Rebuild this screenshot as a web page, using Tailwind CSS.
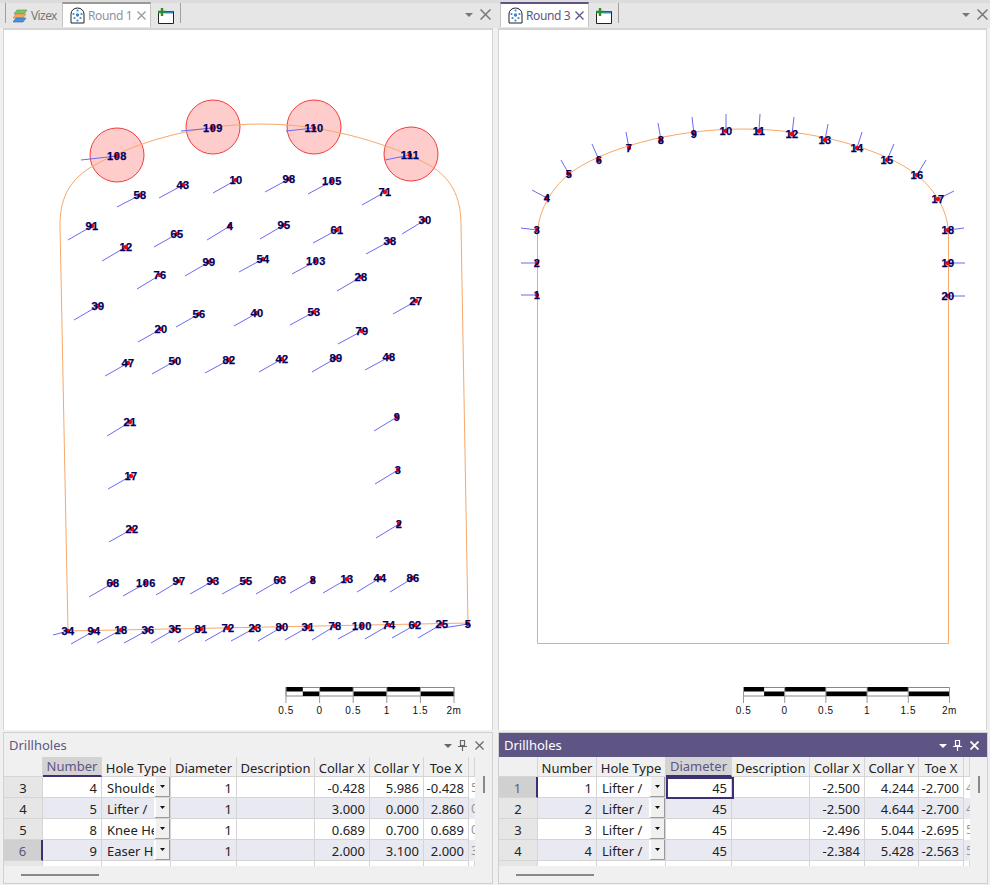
<!DOCTYPE html><html lang="en">
<head>
<meta charset="UTF-8">
<title>Drillholes</title>
<script src="https://cdn.jsdelivr.net/npm/@tailwindcss/browser@4"></script>
</head>
<body class="bg-[#f0f0f0] overflow-hidden">
<div class="w-[990px] h-[885px] flex font-['Noto_Sans',sans-serif] text-[13px] text-[#222]">

  <!-- left pane -->
  <div class="w-[495px] h-full flex flex-col">
    <div class="h-[28px] pl-[5px] pr-[2px] flex items-end bg-[#e6e6e6] border-t-[3px] border-[#dcdcdc]">
      <div class="w-px h-[20px] mb-[5px] bg-[#a0a0a0]"></div>
      <div class="w-[56px] h-[24px] flex items-center pl-[7px] gap-[3px] text-[12px] tracking-[-0.6px] text-[#777]">
        <svg width="15" height="15" viewBox="0 0 15 15"><path d="M4 1h10l-3 4H1z" fill="#7cc36e" stroke="#4a9a46" stroke-width=".6"/><path d="M3 5h10l-3 4H0z" fill="#f2a65a" stroke="#d2803a" stroke-width=".6"/><path d="M3 9h10l-3 4H0z" fill="#4a90d9" stroke="#2a6cb0" stroke-width=".6"/></svg>
        <span>Vizex</span>
      </div>
      <div class="w-[89px] h-[25px] mb-[1px] flex items-center pl-[7px] gap-[3px] whitespace-nowrap bg-white border-x border-[#c4c4c4] border-t-[2px] border-t-[#999] text-[12px] tracking-[-0.4px] text-[#8f8fa3]">
        <svg class="shrink-0" width="15" height="17" viewBox="0 0 15 17"><path d="M1 16V7a6.500 6 0 0 1 13 0v9z" fill="#fff" stroke="#222"/><g fill="#3a86c8"><circle cx="7.500" cy="3.500" r="1.100"/><circle cx="7.500" cy="8" r="1.700"/><circle cx="3.500" cy="7" r="1.100"/><circle cx="11.500" cy="7" r="1.100"/><circle cx="4.500" cy="11" r="1.100"/><circle cx="10.500" cy="11" r="1.100"/><circle cx="7.500" cy="13.500" r="1.100"/></g></svg>
        <span>Round 1</span>
        <svg class="ml-auto mr-[4px] shrink-0" width="9" height="9" viewBox="0 0 9 9"><path d="M.5.5l8 8M8.500.5l-8 8" stroke="#999" stroke-width="1.300"/></svg>
      </div>
      <svg class="ml-[7px] mb-[4px]" width="17" height="16" viewBox="0 0 17 16"><path d="M.5 3.500h15v12H.5z" fill="#fff" stroke="#222"/><path d="M8 4.500h7" stroke="#3b8ad0" stroke-width="2"/><path d="M4 0v8M0 4h8" stroke="#2f8a32" stroke-width="2.400"/></svg>
      <div class="w-px h-[20px] mb-[5px] ml-[5px] bg-[#a0a0a0]"></div>
      <div class="ml-auto flex items-center gap-[7px] mb-[8px]">
        <svg width="8" height="4" viewBox="0 0 8 4"><path d="M0 0h8L4 4z" fill="#777"/></svg>
        <svg class="mr-[2px]" width="11" height="11" viewBox="0 0 11 11"><path d="M.5.5l10 10M10.500.5l-10 10" stroke="#777" stroke-width="1.500"/></svg>
      </div>
    </div>
    <div class="ml-[3px] mr-[2px] h-[702px] bg-white border-t-2 border-x border-[#d4d4d4]">
      <svg id="left-view" class="block w-full h-full" viewBox="4 30 488 700"></svg>
    </div>
    <div id="left-panel" class="mt-[2px] ml-[3px] mr-[2px] h-[152px] border border-[#d0d0d0] bg-[#f0f0f0] flex flex-col"></div>
  </div>

  <!-- right pane -->
  <div class="w-[495px] h-full flex flex-col">
    <div class="h-[28px] pl-[5px] flex items-end bg-[#e6e6e6] border-t-[3px] border-[#dcdcdc]">
      <div class="w-[89px] h-[25px] mb-[1px] flex items-center pl-[7px] gap-[3px] whitespace-nowrap bg-white border-x border-[#c4c4c4] border-t-[2px] border-t-[#5f5585] text-[12px] tracking-[-0.4px] text-[#5f5585]">
        <svg class="shrink-0" width="15" height="17" viewBox="0 0 15 17"><path d="M1 16V7a6.500 6 0 0 1 13 0v9z" fill="#fff" stroke="#222"/><g fill="#3a86c8"><circle cx="7.500" cy="3.500" r="1.100"/><circle cx="7.500" cy="8" r="1.700"/><circle cx="3.500" cy="7" r="1.100"/><circle cx="11.500" cy="7" r="1.100"/><circle cx="4.500" cy="11" r="1.100"/><circle cx="10.500" cy="11" r="1.100"/><circle cx="7.500" cy="13.500" r="1.100"/></g></svg>
        <span>Round 3</span>
        <svg class="ml-auto mr-[4px] shrink-0" width="9" height="9" viewBox="0 0 9 9"><path d="M.5.5l8 8M8.500.5l-8 8" stroke="#5f5585" stroke-width="1.300"/></svg>
      </div>
      <svg class="ml-[7px] mb-[4px]" width="17" height="16" viewBox="0 0 17 16"><path d="M.5 3.500h15v12H.5z" fill="#fff" stroke="#222"/><path d="M8 4.500h7" stroke="#3b8ad0" stroke-width="2"/><path d="M4 0v8M0 4h8" stroke="#2f8a32" stroke-width="2.400"/></svg>
      <div class="w-px h-[20px] mb-[5px] ml-[5px] bg-[#a0a0a0]"></div>
      <div class="ml-auto flex items-center gap-[7px] mb-[8px]">
        <svg width="8" height="4" viewBox="0 0 8 4"><path d="M0 0h8L4 4z" fill="#777"/></svg>
        <svg class="mr-[2px]" width="11" height="11" viewBox="0 0 11 11"><path d="M.5.5l10 10M10.500.5l-10 10" stroke="#777" stroke-width="1.500"/></svg>
      </div>
    </div>
    <div class="ml-[3px] mr-[3px] h-[702px] bg-white border-t-2 border-x border-[#d4d4d4]">
      <svg id="right-view" class="block w-full h-full" viewBox="499 30 487 700"></svg>
    </div>
    <div id="right-panel" class="mt-[2px] ml-[3px] mr-[2px] h-[152px] border border-[#d0d0d0] bg-[#f0f0f0] flex flex-col"></div>
  </div>
</div>

<script>
// number, label x, label y, line start x, line start y
const leftHoles = [
  [108,117,156,81,160],[109,213,128,181,131],[110,314,128,286,131],[111,410,155,385,160],
  [58,140,195,117,207],[43,183,185,159,198],[10,236,180,213,193],[98,289,179,265,192],[105,332,181,308,194],[71,385,192,362,205],
  [91,92,226,68,240],[12,126,247,102,261],[65,177,234,154,247],[4,230,226,207,240],[95,284,225,260,239],[61,337,230,313,243],[38,390,241,366,254],[30,425,220,402,234],
  [76,160,275,137,289],[99,209,262,185,276],[54,263,259,239,272],[103,316,261,292,274],[28,361,277,337,291],
  [39,98,306,74,320],[27,416,301,393,314],[20,161,329,138,342],[56,199,314,176,327],[40,257,313,234,326],[53,314,312,290,325],[79,362,331,338,344],
  [47,128,363,105,376],[50,175,361,152,374],[82,229,360,205,373],[42,282,359,259,372],[89,336,358,312,372],[48,389,357,365,370],
  [21,130,422,107,436],[9,397,417,374,431],[17,131,476,108,489],[3,398,470,375,484],[22,132,529,109,542],[2,399,524,376,538],
  [68,113,583,89,597],[106,146,583,123,596],[97,179,581,156,595],[93,213,581,190,594],[55,246,581,222,594],[63,280,580,256,594],[8,313,580,290,593],[13,347,579,323,593],[44,380,578,357,592],[86,413,578,390,592],
  [34,68,631,53,635],[94,94,631,71,644],[18,121,630,97,643],[36,148,630,124,643],[35,175,629,151,643],[81,201,629,178,642],[72,228,628,205,641],[23,255,628,231,641],[80,282,627,258,641],[31,308,627,285,640],[78,335,626,312,640],[100,362,626,338,639],[74,389,625,365,639],[62,415,625,392,638],[25,442,624,418,638],[5,468,624,443,628]
];
const rightHoles = [
  [1,537,295,521,295],[2,537,263,521,263],[3,537,230,521,228],[4,547,198,532,190],[5,569,174,561,160],[6,599,160,592,144],[7,629,148,626,132],[8,661,140,658,123],[9,694,134,692,117],[10,726,131,726,114],
  [11,759,131,760,114],[12,792,134,794,117],[13,825,140,828,124],[14,857,148,862,132],[15,887,160,894,144],[16,917,175,926,160],[17,938,199,954,191],[18,948,230,964,228],[19,948,263,965,263],[20,948,296,965,296]
];
const circles = [[117,155],[213,127],[314,127],[411,154]];

function holesSvg(holes) {
  let lines = '', labels = '';
  holes.forEach(h => {
    lines += `<line x1="${h[3]}" y1="${h[4]}" x2="${h[1]}" y2="${h[2]}" stroke="#6a6af5" stroke-width="1"/>`;
    labels += `<circle cx="${h[1]}" cy="${h[2]}" r="2.200" fill="#f00"/>`;
    labels += `<text x="${h[1]}" y="${h[2] + 4}" text-anchor="middle" font-family="'Liberation Sans',sans-serif" font-weight="700" font-size="11" letter-spacing=".5" stroke="#000060" stroke-width=".25" fill="#000060">${h[0]}</text>`;
  });
  return lines + labels;
}

function scaleSvg(x0, step, ticks) {
  const half = step / 2;
  let s = `<rect x="${x0}" y="687.500" width="${step * 5}" height="8.500" fill="#fff" stroke="#888" stroke-width="1"/>`;
  const black = (x, w, y) => `<rect x="${x}" y="${y}" width="${w}" height="4.500" fill="#000"/>`;
  s += black(x0, half, 687) + black(x0 + half, half, 691.500);
  for (let i = 1; i < 5; i++) s += black(x0 + step * i, step, i % 2 ? 687 : 691.500);
  ticks.forEach((t, i) => {
    const x = x0 + step * i;
    s += `<line x1="${x}" y1="687" x2="${x}" y2="703" stroke="#999"/>`;
    s += `<text x="${x}" y="714" text-anchor="middle" font-family="'Liberation Sans',sans-serif" font-size="10" letter-spacing=".6" fill="#111">${t}</text>`;
  });
  return s;
}

const ticks = ['0.5', '0', '0.5', '1', '1.5', '2m'];

document.getElementById('left-view').innerHTML =
  circles.map(c => `<circle cx="${c[0]}" cy="${c[1]}" r="27" fill="#ffcccc" stroke="#f23c3c"/>`).join('') +
  `<path d="M68 631 L60 225 C60 195 72 178 93 166 C130 145 190 124 262 124 C330 124 395 146 431 166 C450 178 461 195 461 225 L468 623 Z" fill="none" stroke="#f7a86a" stroke-width="1"/>` +
  holesSvg(leftHoles) + scaleSvg(286, 33.6, ticks);

document.getElementById('right-view').innerHTML =
  `<path d="M537.500 643.500 V235 C538 212 550 190 569 174 C600 150 670 129 743 129 C815 129 885 150 917 175 C936 191 948.500 212 948.500 235 V643.500 Z" fill="none" stroke="#f7a86a" stroke-width="1"/>` +
  holesSvg(rightHoles) + scaleSvg(743.5, 41.2, ticks);

const colClass = ['w-[39px]','w-[59px]','w-[69px]','w-[66px]','w-[78px]','w-[55px]','w-[54px]','w-[45px]','w-[6px]'];
const headers = ['', 'Number', 'Hole Type', 'Diameter', 'Description', 'Collar X', 'Collar Y', 'Toe X', ''];

function headerRow(active) {
  return '<div class="flex h-[20px] leading-[14px] bg-[#f0f0f0]">' + headers.map((h, i) => {
    const on = i === active;
    const cls = on ? 'bg-[#d3d3d3] text-[#5f5585] border-b-2 border-b-[#3c2f72]' : 'border-b border-b-[#d5d5d5] pt-[2px]';
    return `<div class="${colClass[i]} ${cls} shrink-0 flex items-center justify-center whitespace-nowrap overflow-hidden border-r border-r-[#d5d5d5]">${h}</div>`;
  }).join('') + '</div>';
}

function dataRow(row, idx, selRow) {
  const alt = idx % 2 === 1 ? 'bg-[#e9e9f1]' : 'bg-white';
  const sel = row[0] === selRow;
  const cell = (i, align, text) => `<div class="${colClass[i]} ${alt} shrink-0 h-full flex items-center ${align} px-[4px] pt-[1px] whitespace-nowrap overflow-hidden border-r border-b border-[#d5d5d5]">${text}</div>`;
  let out = '<div class="flex h-[21px] leading-[14px]">';
  out += `<div class="${colClass[0]} ${sel ? 'bg-[#d0d0d0] text-[#5f5585] border-r-2 border-r-[#3c2f72]' : 'bg-[#e6e6e6] border-r border-r-[#d5d5d5]'} shrink-0 h-full flex items-center justify-center pt-[1px] border-b border-b-[#d5d5d5]">${row[0]}</div>`;
  out += cell(1, 'justify-end', row[1]);
  out += `<div class="${colClass[2]} ${alt} relative shrink-0 h-full flex items-center pl-[5px] pt-[1px] whitespace-nowrap overflow-hidden border-r border-b border-[#d5d5d5]">${row[2]}<span class="absolute right-0 top-0 w-[16px] h-[20px] flex items-center justify-center bg-[#f0f0f0] border-r border-b border-[#9a9a9a] border-l-2 border-l-white"><svg width="5" height="3" viewBox="0 0 5 3"><path d="M0 0h5L2.500 3z" fill="#111"/></svg></span></div>`;
  out += cell(3, 'justify-end', row[3]);
  out += cell(4, 'justify-start', '');
  out += cell(5, 'justify-end', row[4]) + cell(6, 'justify-end', row[5]) + cell(7, 'justify-end', row[6]);
  out += `<div class="${colClass[8]} ${alt} shrink-0 h-full overflow-hidden text-[#999] pl-[2px] pt-[3px]">${row[7]}</div>`;
  return out + '</div>';
}

function stubRow() {
  return '<div class="flex h-[5px] overflow-hidden">' + colClass.map((c, i) => `<div class="${c} ${i === 0 ? 'bg-[#e6e6e6]' : 'bg-white'} shrink-0 h-full border-r border-r-[#d5d5d5]"></div>`).join('') + '</div>';
}

function panel(active, rows, activeHeader, selRow, selCell) {
  const titleBar = active
    ? 'bg-[#5f5585] text-white'
    : 'bg-[#f0f0f0] text-[#5f5585]';
  const ic = active ? '#fff' : '#666';
  return `<div class="${titleBar} h-[24px] flex items-center pl-[5px] pr-[8px] text-[13px] pt-[1px] shrink-0">
      <span>Drillholes</span>
      <svg class="ml-auto" width="8" height="4" viewBox="0 0 8 4"><path d="M0 0h8L4 4z" fill="${ic}"/></svg>
      <svg class="ml-[6px]" width="9" height="11" viewBox="0 0 9 11"><path d="M2.500 .5h4v5h-4zM0 6.500h9M4.500 6.500V11" fill="none" stroke="${ic}" stroke-width="1.200"/></svg>
      <svg class="ml-[8px]" width="9" height="9" viewBox="0 0 9 9"><path d="M.5.5l8 8M8.500.5l-8 8" stroke="${ic}" stroke-width="${active ? 1.800 : 1.200}"/></svg>
    </div>
    <div class="relative flex-1">
      <div class="w-[471px]">${headerRow(activeHeader)}${rows.map((r, i) => dataRow(r, i, selRow)).join('')}${stubRow()}</div>
      ${selCell ? '<div class="absolute left-[167px] top-[20px] w-[68px] h-[22px] border-2 border-[#3c2f72]"></div>' : ''}
      <div class="absolute left-[479px] top-[19px] w-[2px] h-[17px] bg-[#888]"></div>
      <div class="absolute left-[17px] bottom-[7px] w-[78px] h-[2px] bg-[#888]"></div>
    </div>`;
}

const leftRows = [
  [3,4,'Shoulde',1,'-0.428','5.986','-0.428','5'],
  [4,5,'Lifter /',1,'3.000','0.000','2.860','0'],
  [5,8,'Knee He',1,'0.689','0.700','0.689','0'],
  [6,9,'Easer H',1,'2.000','3.100','2.000','3']
];
const rightRows = [
  [1,1,'Lifter /',45,'-2.500','4.244','-2.700','4'],
  [2,2,'Lifter /',45,'-2.500','4.644','-2.700','4'],
  [3,3,'Lifter /',45,'-2.496','5.044','-2.695','5'],
  [4,4,'Lifter /',45,'-2.384','5.428','-2.563','5']
];
document.getElementById('left-panel').innerHTML = panel(false, leftRows, 1, 6, false);
document.getElementById('right-panel').innerHTML = panel(true, rightRows, 3, 1, true);
</script>
</body>
</html>
